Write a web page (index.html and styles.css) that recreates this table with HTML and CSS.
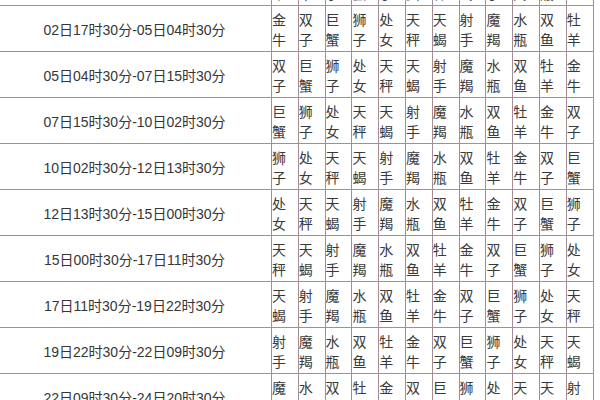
FILE: index.html
```html
<!DOCTYPE html>
<html lang="zh">
<head>
<meta charset="utf-8">
<link rel="stylesheet" href="styles.css">
</head>
<body>
<table class="tbl">
<colgroup><col class="c-date"><col span="12" class="c-sign"></colgroup>
<tr><td class="date">30日06时30分-02日17时30分</td><td class="sign">牡<br>羊</td><td class="sign">金<br>牛</td><td class="sign">双<br>子</td><td class="sign">巨<br>蟹</td><td class="sign">狮<br>子</td><td class="sign">处<br>女</td><td class="sign">天<br>秤</td><td class="sign">天<br>蝎</td><td class="sign">射<br>手</td><td class="sign">魔<br>羯</td><td class="sign">水<br>瓶</td><td class="sign">双<br>鱼</td></tr>
<tr><td class="date">02日17时30分-05日04时30分</td><td class="sign">金<br>牛</td><td class="sign">双<br>子</td><td class="sign">巨<br>蟹</td><td class="sign">狮<br>子</td><td class="sign">处<br>女</td><td class="sign">天<br>秤</td><td class="sign">天<br>蝎</td><td class="sign">射<br>手</td><td class="sign">魔<br>羯</td><td class="sign">水<br>瓶</td><td class="sign">双<br>鱼</td><td class="sign">牡<br>羊</td></tr>
<tr><td class="date">05日04时30分-07日15时30分</td><td class="sign">双<br>子</td><td class="sign">巨<br>蟹</td><td class="sign">狮<br>子</td><td class="sign">处<br>女</td><td class="sign">天<br>秤</td><td class="sign">天<br>蝎</td><td class="sign">射<br>手</td><td class="sign">魔<br>羯</td><td class="sign">水<br>瓶</td><td class="sign">双<br>鱼</td><td class="sign">牡<br>羊</td><td class="sign">金<br>牛</td></tr>
<tr><td class="date">07日15时30分-10日02时30分</td><td class="sign">巨<br>蟹</td><td class="sign">狮<br>子</td><td class="sign">处<br>女</td><td class="sign">天<br>秤</td><td class="sign">天<br>蝎</td><td class="sign">射<br>手</td><td class="sign">魔<br>羯</td><td class="sign">水<br>瓶</td><td class="sign">双<br>鱼</td><td class="sign">牡<br>羊</td><td class="sign">金<br>牛</td><td class="sign">双<br>子</td></tr>
<tr><td class="date">10日02时30分-12日13时30分</td><td class="sign">狮<br>子</td><td class="sign">处<br>女</td><td class="sign">天<br>秤</td><td class="sign">天<br>蝎</td><td class="sign">射<br>手</td><td class="sign">魔<br>羯</td><td class="sign">水<br>瓶</td><td class="sign">双<br>鱼</td><td class="sign">牡<br>羊</td><td class="sign">金<br>牛</td><td class="sign">双<br>子</td><td class="sign">巨<br>蟹</td></tr>
<tr><td class="date">12日13时30分-15日00时30分</td><td class="sign">处<br>女</td><td class="sign">天<br>秤</td><td class="sign">天<br>蝎</td><td class="sign">射<br>手</td><td class="sign">魔<br>羯</td><td class="sign">水<br>瓶</td><td class="sign">双<br>鱼</td><td class="sign">牡<br>羊</td><td class="sign">金<br>牛</td><td class="sign">双<br>子</td><td class="sign">巨<br>蟹</td><td class="sign">狮<br>子</td></tr>
<tr><td class="date">15日00时30分-17日11时30分</td><td class="sign">天<br>秤</td><td class="sign">天<br>蝎</td><td class="sign">射<br>手</td><td class="sign">魔<br>羯</td><td class="sign">水<br>瓶</td><td class="sign">双<br>鱼</td><td class="sign">牡<br>羊</td><td class="sign">金<br>牛</td><td class="sign">双<br>子</td><td class="sign">巨<br>蟹</td><td class="sign">狮<br>子</td><td class="sign">处<br>女</td></tr>
<tr><td class="date">17日11时30分-19日22时30分</td><td class="sign">天<br>蝎</td><td class="sign">射<br>手</td><td class="sign">魔<br>羯</td><td class="sign">水<br>瓶</td><td class="sign">双<br>鱼</td><td class="sign">牡<br>羊</td><td class="sign">金<br>牛</td><td class="sign">双<br>子</td><td class="sign">巨<br>蟹</td><td class="sign">狮<br>子</td><td class="sign">处<br>女</td><td class="sign">天<br>秤</td></tr>
<tr><td class="date">19日22时30分-22日09时30分</td><td class="sign">射<br>手</td><td class="sign">魔<br>羯</td><td class="sign">水<br>瓶</td><td class="sign">双<br>鱼</td><td class="sign">牡<br>羊</td><td class="sign">金<br>牛</td><td class="sign">双<br>子</td><td class="sign">巨<br>蟹</td><td class="sign">狮<br>子</td><td class="sign">处<br>女</td><td class="sign">天<br>秤</td><td class="sign">天<br>蝎</td></tr>
<tr><td class="date">22日09时30分-24日20时30分</td><td class="sign">魔<br>羯</td><td class="sign">水<br>瓶</td><td class="sign">双<br>鱼</td><td class="sign">牡<br>羊</td><td class="sign">金<br>牛</td><td class="sign">双<br>子</td><td class="sign">巨<br>蟹</td><td class="sign">狮<br>子</td><td class="sign">处<br>女</td><td class="sign">天<br>秤</td><td class="sign">天<br>蝎</td><td class="sign">射<br>手</td></tr>
</table>
</body>
</html>
```
FILE: styles.css
```css
html, body {
  margin: 0;
  padding: 0;
  background: #ffffff;
  overflow: hidden;
}
.tbl {
  border-collapse: collapse;
  table-layout: fixed;
  width: 596px;
  margin: -41px 0 0 -3px;
  font-family: "Liberation Sans", "Noto Sans CJK SC", sans-serif;
  color: #333333;
}
.c-date {
  width: 274px;
}
.c-sign {
  width: 26.8px;
}
.tbl tr {
  height: 46px;
}
.tbl td {
  border: 1px solid #a38e98;
  padding: 0;
  vertical-align: middle;
}
.date {
  text-align: center;
  font-size: 14px;
  color: #363636;
}
.sign {
  font-family: "Noto Sans CJK SC", sans-serif;
  font-size: 14px;
  line-height: 20px;
  text-align: left;
  padding-left: 2px;
  color: #3a3a3a;
}
```
